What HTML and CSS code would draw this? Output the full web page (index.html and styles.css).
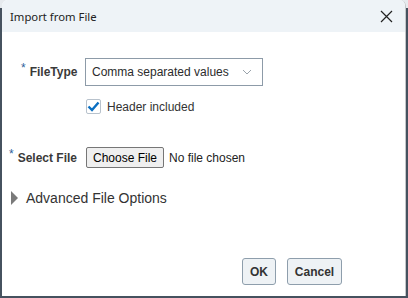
FILE: index.html
```html
<!DOCTYPE html>
<html lang="en">
<head>
  <meta charset="UTF-8">
  <title>Import from File</title>
  <link rel="stylesheet" href="styles.css">
</head>
<body>
  <div class="dialog">
    <div class="dialog-header">
      <span class="dialog-title">Import from File</span>
      <button class="close-btn" aria-label="Close">
        <svg width="13" height="13" viewBox="0 0 13 13"><path d="M1 1L12 12M12 1L1 12" stroke="#222" stroke-width="1.2" fill="none"/></svg>
      </button>
    </div>

    <div class="dialog-body">
      <div class="field-row filetype-row">
        <label class="field-label"><span class="req">*</span>FileType</label>
        <div class="select-box">
          <span>Comma separated values</span>
          <svg width="10" height="6" viewBox="0 0 10 6"><path d="M1 1L5 5L9 1" stroke="#9aa3ab" stroke-width="1" fill="none"/></svg>
        </div>
      </div>

      <div class="check-row">
        <span class="checkbox">
          <svg width="13" height="11" viewBox="0 0 13 11"><path d="M1.5 5.5L5 9L11.5 1.5" stroke="#0a6fc2" stroke-width="2.4" fill="none"/></svg>
        </span>
        <span class="check-label">Header included</span>
      </div>

      <div class="field-row file-row">
        <label class="field-label"><span class="req">*</span>Select File</label>
        <button class="choose-btn">Choose File</button>
        <span class="no-file">No file chosen</span>
      </div>

      <div class="advanced">
        <span class="triangle"></span>
        <span>Advanced File Options</span>
      </div>
    </div>

    <div class="dialog-footer">
      <button class="btn ok-btn">OK</button>
      <button class="btn cancel-btn">Cancel</button>
    </div>
  </div>
</body>
</html>
```

FILE: styles.css
```css
* {
  margin: 0;
  padding: 0;
  box-sizing: border-box;
}

html, body {
  height: 100%;
}

body {
  background: linear-gradient(to bottom, #e6eaee 0, #e6eaee 8px, #46525f 8px);
  font-family: 'Liberation Sans', Arial, sans-serif;
  color: #333;
  padding: 0 2px 2px 2px;
}

.dialog {
  height: 296px;
  background: #fff;
  border-right: 1px solid #c4c7ca;
  border-radius: 6px 6px 0 0;
  display: flex;
  flex-direction: column;
  overflow: hidden;
}

.dialog-header {
  height: 32px;
  background: #eef3f7;
  display: flex;
  align-items: center;
  justify-content: space-between;
  padding: 0 12px 0 8px;
}

.dialog-title {
  font-family: 'Noto Sans', sans-serif;
  font-size: 11.3px;
  color: #222;
}

.close-btn {
  border: none;
  background: none;
  display: flex;
  margin-top: 1px;
}

.dialog-body {
  flex: 1;
  padding-top: 26px;
}

.field-row {
  display: flex;
  align-items: center;
}

.field-label {
  font-size: 12px;
  font-weight: bold;
  color: #3a3a3a;
  display: flex;
  align-items: flex-start;
}

.req {
  color: #2f5f9a;
  font-weight: normal;
  font-size: 12px;
  margin-right: 4px;
  margin-top: -4px;
}

.filetype-row {
  padding-left: 19px;
}

.filetype-row .field-label {
  width: 64px;
}

.select-box {
  width: 178px;
  height: 28px;
  border: 1px solid #8d9ba8;
  display: flex;
  align-items: center;
  justify-content: space-between;
  padding: 0 10px 0 6px;
  font-size: 12px;
  color: #2b2b2b;
}

.check-row {
  display: flex;
  align-items: center;
  padding-left: 84px;
  margin-top: 13px;
}

.checkbox {
  width: 15px;
  height: 15px;
  border: 1px solid #b8c2cc;
  border-radius: 2px;
  display: flex;
  align-items: center;
  justify-content: center;
  margin-right: 6px;
}

.check-label {
  font-size: 12px;
  color: #333;
}

.file-row {
  padding-left: 7px;
  margin-top: 33px;
}

.file-row .field-label {
  width: 77px;
}

.choose-btn {
  font-family: 'Liberation Sans', Arial, sans-serif;
  font-size: 12px;
  color: #000;
  background: #efefef;
  border: 1px solid #767676;
  border-radius: 2px;
  height: 21px;
  width: 78px;
}

.no-file {
  font-size: 12px;
  color: #222;
  margin-left: 5px;
}

.advanced {
  display: flex;
  align-items: center;
  font-size: 14px;
  color: #333;
  padding-left: 9px;
  margin-top: 22px;
}

.triangle {
  width: 0;
  height: 0;
  border-top: 7px solid transparent;
  border-bottom: 7px solid transparent;
  border-left: 7px solid #7a7a7a;
  margin-right: 8px;
}

.dialog-footer {
  display: flex;
  justify-content: flex-end;
  gap: 11px;
  padding: 0 63px 11px 0;
}

.btn {
  font-family: 'Liberation Sans', Arial, sans-serif;
  font-size: 12px;
  font-weight: bold;
  color: #333;
  height: 27px;
  background: #eef2f5;
  border: 1px solid #8e9eac;
  border-radius: 3px;
}

.ok-btn {
  width: 34px;
}

.cancel-btn {
  width: 55px;
}
```
